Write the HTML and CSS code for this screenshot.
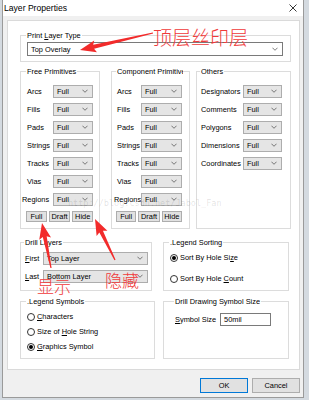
FILE: index.html
```html
<!DOCTYPE html>
<html lang="en">
<head>
  <meta charset="UTF-8" />
  <meta name="viewport" content="width=device-width, initial-scale=1.0"/>
  <title>Layer Properties</title>
  <link rel="stylesheet" href="styles.css">
</head>
<body>
  <div class="window">
    <div class="titlebar">
      <span>Layer Properties</span>
      <svg class="close" viewBox="0 0 8 8"><path d="M0.5 0.5 L7.5 7.5 M7.5 0.5 L0.5 7.5" stroke="#222" stroke-width="0.9"/></svg>
    </div>

    <div class="client">
      <div class="panel">
        <fieldset class="grp grp-type">
          <legend>Print <u>L</u>ayer Type</legend>
          <div class="dd dd-white"><span>Top Overlay</span><svg class="chev" viewBox="0 0 7 4"><path d="M0.5 0.5 L3.5 3.5 L6.5 0.5"/></svg></div>
        </fieldset>

        <div class="row prims">
          <fieldset class="grp grp-free">
            <legend>Free Primitives</legend>
            <div class="prim"><span class="lbl">Arcs</span><div class="dd"><span>Full</span><svg class="chev" viewBox="0 0 7 4"><path d="M0.5 0.5 L3.5 3.5 L6.5 0.5"/></svg></div></div>
            <div class="prim"><span class="lbl">Fills</span><div class="dd"><span>Full</span><svg class="chev" viewBox="0 0 7 4"><path d="M0.5 0.5 L3.5 3.5 L6.5 0.5"/></svg></div></div>
            <div class="prim"><span class="lbl">Pads</span><div class="dd"><span>Full</span><svg class="chev" viewBox="0 0 7 4"><path d="M0.5 0.5 L3.5 3.5 L6.5 0.5"/></svg></div></div>
            <div class="prim"><span class="lbl">Strings</span><div class="dd"><span>Full</span><svg class="chev" viewBox="0 0 7 4"><path d="M0.5 0.5 L3.5 3.5 L6.5 0.5"/></svg></div></div>
            <div class="prim"><span class="lbl">Tracks</span><div class="dd"><span>Full</span><svg class="chev" viewBox="0 0 7 4"><path d="M0.5 0.5 L3.5 3.5 L6.5 0.5"/></svg></div></div>
            <div class="prim"><span class="lbl">Vias</span><div class="dd"><span>Full</span><svg class="chev" viewBox="0 0 7 4"><path d="M0.5 0.5 L3.5 3.5 L6.5 0.5"/></svg></div></div>
            <div class="prim"><span class="lbl lbl-wide">Regions</span><div class="dd"><span>Full</span><svg class="chev" viewBox="0 0 7 4"><path d="M0.5 0.5 L3.5 3.5 L6.5 0.5"/></svg></div></div>
            <div class="btns">
              <button class="btn">Full</button><button class="btn btn-draft">Draft</button><button class="btn">Hide</button>
            </div>
          </fieldset>

          <fieldset class="grp grp-comp">
            <legend>Component Primitives</legend>
            <div class="prim"><span class="lbl">Arcs</span><div class="dd"><span>Full</span><svg class="chev" viewBox="0 0 7 4"><path d="M0.5 0.5 L3.5 3.5 L6.5 0.5"/></svg></div></div>
            <div class="prim"><span class="lbl">Fills</span><div class="dd"><span>Full</span><svg class="chev" viewBox="0 0 7 4"><path d="M0.5 0.5 L3.5 3.5 L6.5 0.5"/></svg></div></div>
            <div class="prim"><span class="lbl">Pads</span><div class="dd"><span>Full</span><svg class="chev" viewBox="0 0 7 4"><path d="M0.5 0.5 L3.5 3.5 L6.5 0.5"/></svg></div></div>
            <div class="prim"><span class="lbl">Strings</span><div class="dd"><span>Full</span><svg class="chev" viewBox="0 0 7 4"><path d="M0.5 0.5 L3.5 3.5 L6.5 0.5"/></svg></div></div>
            <div class="prim"><span class="lbl">Tracks</span><div class="dd"><span>Full</span><svg class="chev" viewBox="0 0 7 4"><path d="M0.5 0.5 L3.5 3.5 L6.5 0.5"/></svg></div></div>
            <div class="prim"><span class="lbl">Vias</span><div class="dd"><span>Full</span><svg class="chev" viewBox="0 0 7 4"><path d="M0.5 0.5 L3.5 3.5 L6.5 0.5"/></svg></div></div>
            <div class="prim"><span class="lbl lbl-wide">Regions</span><div class="dd"><span>Full</span><svg class="chev" viewBox="0 0 7 4"><path d="M0.5 0.5 L3.5 3.5 L6.5 0.5"/></svg></div></div>
            <div class="btns">
              <button class="btn">Full</button><button class="btn btn-draft">Draft</button><button class="btn">Hide</button>
            </div>
          </fieldset>

          <fieldset class="grp grp-other">
            <legend>Others</legend>
            <div class="prim"><span class="lbl">Designators</span><div class="dd"><span>Full</span><svg class="chev" viewBox="0 0 7 4"><path d="M0.5 0.5 L3.5 3.5 L6.5 0.5"/></svg></div></div>
            <div class="prim"><span class="lbl">Comments</span><div class="dd"><span>Full</span><svg class="chev" viewBox="0 0 7 4"><path d="M0.5 0.5 L3.5 3.5 L6.5 0.5"/></svg></div></div>
            <div class="prim"><span class="lbl">Polygons</span><div class="dd"><span>Full</span><svg class="chev" viewBox="0 0 7 4"><path d="M0.5 0.5 L3.5 3.5 L6.5 0.5"/></svg></div></div>
            <div class="prim"><span class="lbl">Dimensions</span><div class="dd"><span>Full</span><svg class="chev" viewBox="0 0 7 4"><path d="M0.5 0.5 L3.5 3.5 L6.5 0.5"/></svg></div></div>
            <div class="prim"><span class="lbl">Coordinates</span><div class="dd"><span>Full</span><svg class="chev" viewBox="0 0 7 4"><path d="M0.5 0.5 L3.5 3.5 L6.5 0.5"/></svg></div></div>
          </fieldset>
        </div>

        <div class="row row-mid">
          <fieldset class="grp grp-drill">
            <legend>Drill Layers</legend>
            <div class="prim"><span class="lbl"><u>F</u>irst</span><div class="dd"><span>Top Layer</span><svg class="chev" viewBox="0 0 7 4"><path d="M0.5 0.5 L3.5 3.5 L6.5 0.5"/></svg></div></div>
            <div class="prim"><span class="lbl"><u>L</u>ast</span><div class="dd"><span>Bottom Layer</span><svg class="chev" viewBox="0 0 7 4"><path d="M0.5 0.5 L3.5 3.5 L6.5 0.5"/></svg></div></div>
          </fieldset>

          <fieldset class="grp grp-sort">
            <legend>.Legend Sorting</legend>
            <div class="opt"><span class="radio on"></span><span>Sort By Hole Si<u>z</u>e</span></div>
            <div class="opt"><span class="radio"></span><span>Sort By Hole <u>C</u>ount</span></div>
          </fieldset>
        </div>

        <div class="row row-low">
          <fieldset class="grp grp-sym">
            <legend>.Legend Symbols</legend>
            <div class="opt opt-tight"><span class="radio"></span><span><u>C</u>haracters</span></div>
            <div class="opt opt-tight"><span class="radio"></span><span>Size of <u>H</u>ole String</span></div>
            <div class="opt opt-tight"><span class="radio on"></span><span><u>G</u>raphics Symbol</span></div>
          </fieldset>

          <fieldset class="grp grp-size">
            <legend>Drill Drawing Symbol Size</legend>
            <div class="size-row"><span><u>S</u>ymbol Size</span><div class="field">50mil</div></div>
          </fieldset>
        </div>
      </div>

      <div class="actions">
        <button class="btn btn-big btn-ok">OK</button>
        <button class="btn btn-big">Cancel</button>
      </div>
    </div>
  </div>

  <!-- annotations drawn over the screenshot -->
  <div class="watermark">http://blog.csdn.net/Jabol_Fan</div>
  <svg class="marks" viewBox="0 0 309 400">
    <polygon points="152.86,32.42 93.19,44.87 94.23,40.53 80,50 96.95,52.21 94.09,48.77 153.14,33.58"/>
    <polygon points="51.59,267.88 46.70,236.34 51.02,237.51 42,223 39.24,239.87 42.78,237.12 50.41,268.12"/>
    <polygon points="115.54,259.74 102.93,230.70 107.40,230.75 95,219 96.61,236.01 99.33,232.46 114.46,260.26"/>
  </svg>
  <span class="note note-top">顶层丝印层</span>
  <span class="note note-show">显示</span>
  <span class="note note-hide">隐藏</span>
</body>
</html>
```

FILE: styles.css
```css
body {
  margin: 0;
  background: #d4dae0;
  font-family: "Liberation Sans", Arial, sans-serif;
  font-size: 7.4px;
  color: #000;
}
.window {
  width: 300px;
  margin-left: 2px;
  border: 1px solid #9a9a9a;
  border-top: none;
  background: #f0f0f0;
}
.titlebar {
  height: 16px;
  background: #fff;
  display: flex;
  align-items: center;
  justify-content: space-between;
  padding: 0 6px 0 1px;
  font-size: 8.6px;
}
.close {
  width: 8px;
  height: 8px;
}
.client {
  padding: 4px 3px 4px 4px;
}
.panel {
  height: 350px;
  box-sizing: border-box;
  background: #fff;
  border: 1px solid #dadada;
  padding: 10px 8px 0 12px;
}
.grp {
  margin: 0;
  min-width: 0;
  border: 1px solid #dcdcdc;
  box-sizing: border-box;
}
.grp legend {
  padding: 0 1px;
  margin-left: -1px;
  line-height: 9px;
  white-space: nowrap;
  max-width: 100%;
  overflow: hidden;
}
.row {
  display: flex;
  align-items: stretch;
}

/* select look-alike */
.dd {
  height: 13px;
  box-sizing: border-box;
  display: flex;
  align-items: center;
  justify-content: space-between;
  padding: 0 4px 0 3px;
  background: #e5e5e5;
  border: 1px solid #adadad;
}
.dd-white {
  height: 14px;
  background: #fff;
  border-color: #7a7a7a;
  margin-top: 2px;
}
.chev {
  width: 6px;
  height: 4px;
  fill: none;
  stroke: #555;
  stroke-width: 0.9;
}

.grp-type {
  padding: 0 7px 5px 6px;
}
.prims {
  margin-top: 5px;
}
.grp-free {
  width: 80px;
  padding: 6px 6px 6px 6px;
}
.grp-comp {
  width: 79px;
  margin-left: 11px;
  padding: 6px 7px 6px 5px;
}
.grp-other {
  width: 95px;
  margin-left: 6px;
  padding: 6px 8px 6px 4px;
}
.prim {
  height: 18px;
  display: flex;
  align-items: center;
}
.lbl {
  width: 26px;
  flex: none;
  white-space: nowrap;
}
.lbl-wide {
  margin-left: -5px;
  width: 31px;
}
.prim .dd {
  flex: 1;
}
.grp-comp .lbl {
  width: 24px;
}
.grp-comp .lbl-wide {
  width: 27px;
  margin-left: -3px;
}
.grp-other .lbl {
  width: 42px;
}
.btns {
  display: flex;
  gap: 2px;
  margin: 3px 0 0 -1px;
}
.btn {
  font: inherit;
  color: #000;
  height: 11px;
  width: 21px;
  padding: 0;
  background: #e1e1e1;
  border: 1px solid #adadad;
}
.btn-draft {
  width: 22px;
}

.row-mid {
  margin-top: 9px;
}
.grp-drill {
  width: 132px;
  padding: 2px 3px 4px 4px;
}
.grp-drill .lbl {
  width: 18px;
}
.grp-sort {
  width: 126px;
  margin-left: 11px;
  padding: 0 4px 1px 6px;
}
.opt {
  height: 21px;
  display: flex;
  align-items: center;
  white-space: nowrap;
}
.opt-tight {
  height: 15px;
}
.radio {
  width: 8px;
  height: 8px;
  flex: none;
  box-sizing: border-box;
  border: 1px solid #333;
  border-radius: 50%;
  margin-right: 2px;
  display: flex;
  align-items: center;
  justify-content: center;
  background: #fff;
}
.radio.on::after {
  content: "";
  width: 4px;
  height: 4px;
  border-radius: 50%;
  background: #000;
}

.row-low {
  margin-top: 6px;
}
.grp-sym {
  width: 135px;
  padding: 3px 4px 4px 6px;
}
.grp-size {
  width: 126px;
  margin-left: 8px;
  padding: 7px 4px 4px 11px;
}
.size-row {
  display: flex;
  align-items: center;
  gap: 4px;
}
.field {
  width: 51px;
  height: 13px;
  box-sizing: border-box;
  border: 1px solid #7a7a7a;
  padding-left: 3px;
  line-height: 11px;
}

.actions {
  display: flex;
  justify-content: flex-end;
  gap: 4px;
  margin-top: 8px;
}
.btn-big {
  width: 48px;
  height: 15px;
}
.btn-ok {
  border-color: #0078d7;
}

/* overlays */
.watermark {
  position: absolute;
  left: 68px;
  top: 198px;
  font-family: "DejaVu Sans Mono", monospace;
  font-size: 8.5px;
  color: rgba(0, 0, 0, 0.12);
}
.marks {
  position: absolute;
  left: 0;
  top: 0;
  width: 309px;
  height: 400px;
  fill: #f22b2b;
}
.note {
  position: absolute;
  font-family: "Noto Sans CJK SC", sans-serif;
  font-weight: 300;
  color: #f03a3a;
  line-height: 1;
  white-space: nowrap;
}
.note-top {
  left: 153px;
  top: 27px;
  font-size: 19px;
}
.note-show {
  left: 37px;
  top: 277px;
  font-size: 17px;
}
.note-hide {
  left: 105px;
  top: 271px;
  font-size: 17px;
}
```
